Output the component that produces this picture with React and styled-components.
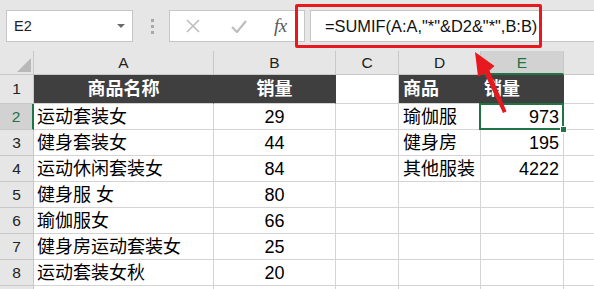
import React from 'react';
import styled, { createGlobalStyle } from 'styled-components';

const Global = createGlobalStyle`
  html, body { margin: 0; padding: 0; background: #fff; }
  body { font-family: "Liberation Sans", "Noto Sans CJK SC", sans-serif; }
`;

const Page = styled.div`
  position: relative;
  width: 594px;
  height: 289px;
  overflow: hidden;
  background: #fff;
`;

const Toolbar = styled.div`
  height: 51px;
  box-sizing: border-box;
  background: #e6e6e6;
  display: flex;
  align-items: flex-start;
  padding: 10px 0 0 6px;
`;

const NameBox = styled.div`
  width: 127px;
  height: 32px;
  box-sizing: border-box;
  background: #fff;
  border: 1px solid #c6c6c6;
  display: flex;
  align-items: center;
  justify-content: space-between;
  padding: 0 7px 0 7px;
  font-size: 14.5px;
  color: #222;
`;

const Caret = styled.span`
  width: 0;
  height: 0;
  border-left: 4px solid transparent;
  border-right: 4px solid transparent;
  border-top: 4px solid #6a6a6a;
`;

const Dots = styled.div`
  margin: 9px 15px 0 18px;
  display: flex;
  flex-direction: column;
  gap: 3px;
`;

const Dot = styled.span`
  width: 3px;
  height: 3px;
  background: #a8a8a8;
`;

const FxBox = styled.div`
  width: 136px;
  height: 32px;
  box-sizing: border-box;
  background: #fff;
  border: 1px solid #c6c6c6;
  display: flex;
  align-items: center;
  padding-left: 15px;
`;

const IconSlot = styled.span`
  width: ${p => p.$w}px;
  display: flex;
  align-items: center;
  justify-content: center;
`;

const Fx = styled.span`
  font-family: "Liberation Serif", serif;
  font-style: italic;
  font-size: 19px;
  color: #5a5a5a;
  letter-spacing: -0.5px;
  margin-left: -2px;
`;

const FormulaBox = styled.div`
  flex: 1;
  height: 32px;
  margin-left: 5px;
  margin-right: -2px;
  box-sizing: border-box;
  background: #fff;
  border: 1px solid #c6c6c6;
  display: flex;
  align-items: center;
  padding-left: 14px;
  font-size: 16.4px;
  color: #111;
  white-space: nowrap;
`;

const Grid = styled.div`
  display: grid;
  grid-template-columns: 34px 180px 122px 63px 82px 83px 60px;
  grid-template-rows: 24px 29px repeat(8, 26px);
`;

const Corner = styled.div`
  box-sizing: border-box;
  background: #e6e6e6;
  border-right: 1px solid #c8c8c8;
  border-bottom: 1px solid #c8c8c8;
  display: flex;
  align-items: flex-end;
  justify-content: flex-end;
  padding: 0 2px 2px 0;
`;

const Triangle = styled.span`
  width: 0;
  height: 0;
  border-left: 14px solid transparent;
  border-bottom: 14px solid #b8b8b8;
`;

const ColHead = styled.div`
  box-sizing: border-box;
  background: ${p => (p.$active ? '#d2d2d2' : '#e6e6e6')};
  color: ${p => (p.$active ? '#217346' : '#222')};
  border-right: 1px solid #c8c8c8;
  border-bottom: ${p => (p.$active ? '2px solid #217346' : '1px solid #c8c8c8')};
  display: flex;
  align-items: center;
  justify-content: center;
  font-size: 15.5px;
  padding-top: ${p => (p.$active ? '1px' : '0')};
`;

const RowHead = styled.div`
  box-sizing: border-box;
  background: ${p => (p.$active ? '#d2d2d2' : '#e6e6e6')};
  color: ${p => (p.$active ? '#217346' : '#222')};
  border-right: ${p => (p.$active ? '2px solid #217346' : '1px solid #c8c8c8')};
  border-bottom: 1px solid #c8c8c8;
  display: flex;
  align-items: center;
  justify-content: center;
  font-size: 15.5px;
`;

const Cell = styled.div`
  box-sizing: border-box;
  position: ${p => (p.$selected ? 'relative' : 'static')};
  background: ${p => (p.$dark ? '#3f3f3f' : '#fff')};
  color: ${p => (p.$dark ? '#fff' : '#000')};
  font-weight: ${p => (p.$dark ? 700 : 400)};
  border-right: 1px solid ${p => (p.$dark ? '#3f3f3f' : '#d4d4d4')};
  border-bottom: 1px solid #d4d4d4;
  display: flex;
  align-items: center;
  justify-content: ${p =>
    p.$align === 'center' ? 'center' : p.$align === 'right' ? 'flex-end' : 'flex-start'};
  padding: 0 ${p => (p.$align === 'right' ? 4 : 0)}px 0 ${p => (p.$align === 'left' ? p.$pl : 0)}px;
  font-size: 18px;
  line-height: 1;
  white-space: nowrap;

  ${p =>
    p.$selected &&
    `
    &::after {
      content: '';
      position: absolute;
      left: -2px;
      right: -1px;
      top: -1px;
      bottom: -1px;
      border: 2px solid #217346;
      z-index: 2;
      pointer-events: none;
    }
  `}
`;

const Handle = styled.span`
  position: absolute;
  right: -4px;
  bottom: -4px;
  width: 5px;
  height: 5px;
  background: #217346;
  border: 1px solid #fff;
  z-index: 3;
`;

const RedFrame = styled.div`
  position: absolute;
  left: 295px;
  top: 4px;
  width: 247px;
  height: 44px;
  box-sizing: border-box;
  border: 3px solid #e8181f;
  border-radius: 2px;
  z-index: 5;
  pointer-events: none;
`;

const ArrowSvg = styled.svg`
  position: absolute;
  left: 0;
  top: 0;
  z-index: 6;
  pointer-events: none;
`;

const rows = [
  { a: '商品名称', b: '销量', c: '', d: '商品', e: '销量', head: true },
  { a: '运动套装女', b: '29', c: '', d: '瑜伽服', e: '973' },
  { a: '健身套装女', b: '44', c: '', d: '健身房', e: '195' },
  { a: '运动休闲套装女', b: '84', c: '', d: '其他服装', e: '4222' },
  { a: '健身服 女', b: '80', c: '', d: '', e: '' },
  { a: '瑜伽服女', b: '66', c: '', d: '', e: '' },
  { a: '健身房运动套装女', b: '25', c: '', d: '', e: '' },
  { a: '运动套装女秋', b: '20', c: '', d: '', e: '' },
  { a: '', b: '', c: '', d: '', e: '', noLabel: true },
];

const letters = ['A', 'B', 'C', 'D', 'E', ''];

export default function App() {
  return (
    <Page>
      <Global />
      <Toolbar>
        <NameBox>
          <span>E2</span>
          <Caret />
        </NameBox>
        <Dots>
          <Dot />
          <Dot />
          <Dot />
        </Dots>
        <FxBox>
          <IconSlot $w={16}>
            <svg width="14" height="14" viewBox="0 0 14 14">
              <path d="M1 1 L13 13 M13 1 L1 13" stroke="#bdbdbd" strokeWidth="1.6" fill="none" />
            </svg>
          </IconSlot>
          <IconSlot $w={30} />
          <IconSlot $w={16}>
            <svg width="16" height="13" viewBox="0 0 16 13">
              <path d="M1 7 L6 12 L15 1" stroke="#bdbdbd" strokeWidth="2.2" fill="none" />
            </svg>
          </IconSlot>
          <IconSlot $w={29} />
          <Fx>fx</Fx>
        </FxBox>
        <FormulaBox>=SUMIF(A:A,"*"&amp;D2&amp;"*",B:B)</FormulaBox>
      </Toolbar>

      <Grid>
        <Corner>
          <Triangle />
        </Corner>
        {letters.map((l, i) => (
          <ColHead key={i} $active={l === 'E'}>
            {l}
          </ColHead>
        ))}

        {rows.map((r, i) => {
          const n = i + 1;
          const head = !!r.head;
          return (
            <React.Fragment key={n}>
              <RowHead $active={n === 2}>{r.noLabel ? '' : n}</RowHead>
              <Cell $dark={head} $align={head ? 'center' : 'left'} $pl={3}>
                {r.a}
              </Cell>
              <Cell $dark={head} $align="center">
                {r.b}
              </Cell>
              <Cell $align="left" $pl={3}>
                {r.c}
              </Cell>
              <Cell $dark={head} $align="left" $pl={4}>
                {r.d}
              </Cell>
              <Cell $dark={head} $align={head ? 'left' : 'right'} $pl={3} $selected={n === 2}>
                {r.e}
                {n === 2 && <Handle />}
              </Cell>
              <Cell $align="left" $pl={3} />
            </React.Fragment>
          );
        })}
      </Grid>

      <RedFrame />
      <ArrowSvg width="594" height="289" viewBox="0 0 594 289">
        <polygon
          points="475,52 494.5,66 489.5,70.5 506.5,111.5 503,113 484.5,73.5 478,76.5"
          fill="#e8181f"
        />
      </ArrowSvg>
    </Page>
  );
}
